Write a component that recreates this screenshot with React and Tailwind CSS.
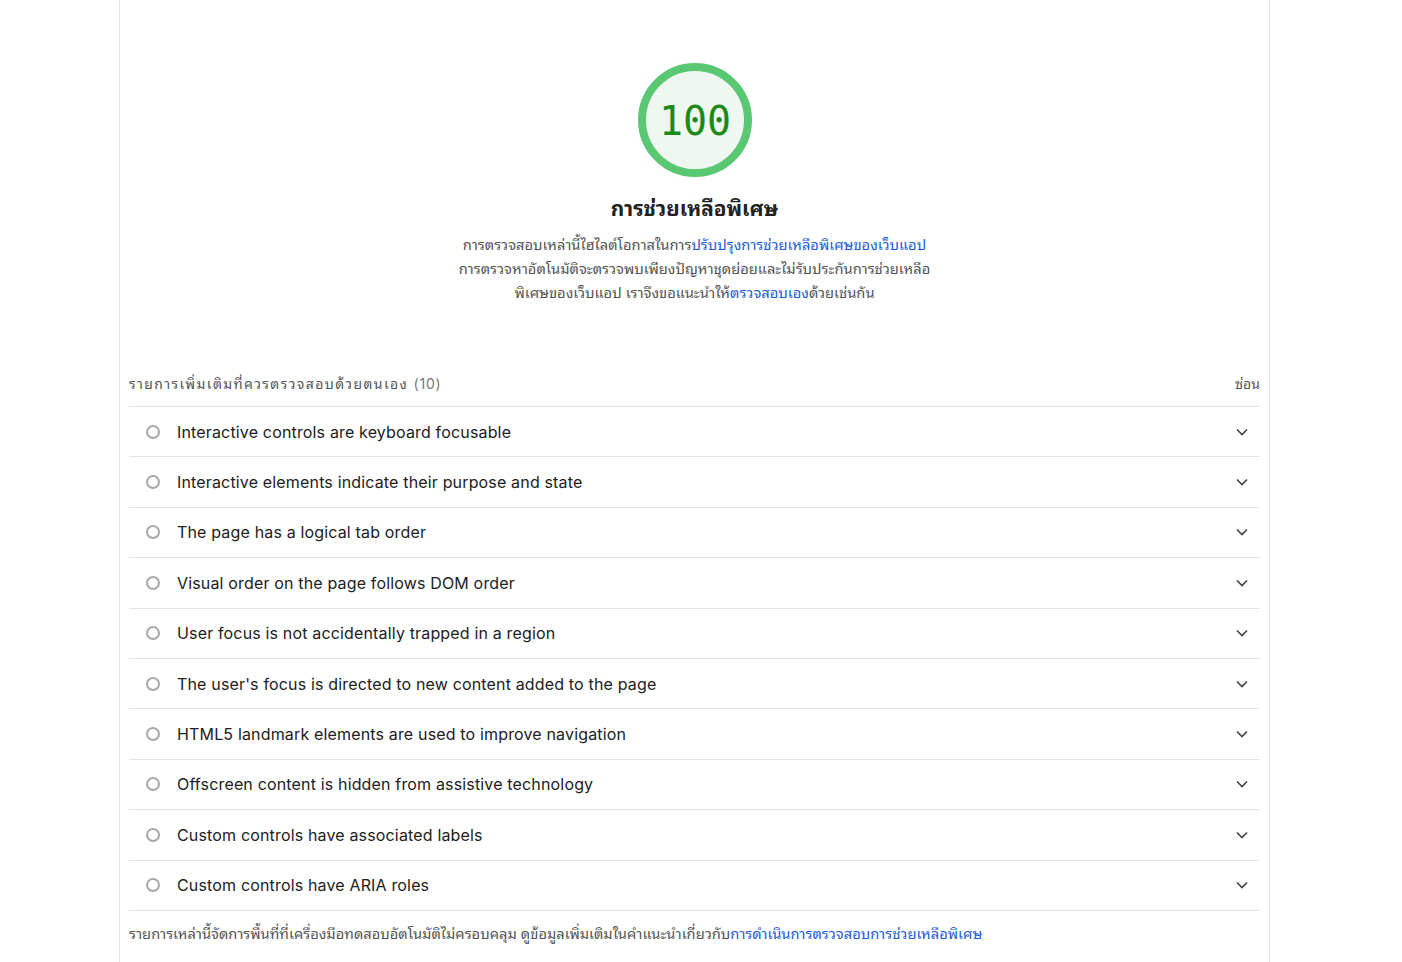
import React from "react";

const audits = [
  "Interactive controls are keyboard focusable",
  "Interactive elements indicate their purpose and state",
  "The page has a logical tab order",
  "Visual order on the page follows DOM order",
  "User focus is not accidentally trapped in a region",
  "The user's focus is directed to new content added to the page",
  "HTML5 landmark elements are used to improve navigation",
  "Offscreen content is hidden from assistive technology",
  "Custom controls have associated labels",
  "Custom controls have ARIA roles",
];

const font =
  "font-['Inter','Noto_Sans_Thai_Looped','Loma','Garuda','Waree','Norasi','Tlwg_Typo','Noto_Sans_Thai','sans-serif']";

const Gauge = () => (
  <svg width="118" height="118" viewBox="0 0 118 118">
    <circle cx="59" cy="59" r="53" fill="#eef7f0" stroke="#5ac772" strokeWidth="8" />
    <text
      x="59"
      y="63"
      textAnchor="middle"
      dominantBaseline="middle"
      fontFamily="DejaVu Sans Mono, monospace"
      fontSize="40"
      fill="#1b8a1b"
    >
      100
    </text>
  </svg>
);

const AuditRow = ({ title }) => (
  <div className="flex items-center h-[50.4px] border-b border-[#e4e4e4] pl-[17px] pr-[8px]">
    <span className="w-[14px] h-[14px] rounded-full border-2 border-[#a8a8a8] shrink-0" />
    <span className="ml-[17px] text-[16px] tracking-[0.16px] text-[#212121] flex-1">{title}</span>
    <svg width="20" height="20" viewBox="0 0 24 24" fill="none" stroke="#444" strokeWidth="2">
      <path d="M6 9l6 6 6-6" />
    </svg>
  </div>
);

const App = () => {
  return (
    <div className={`min-h-screen bg-white ${font}`}>
      <div className="ml-[119px] w-[1151px] min-h-[962px] border-x border-[#e2e2e2] px-[9px]">
        <div className="flex flex-col items-center pt-[61px]">
          <Gauge />
          <h1 className="mt-[15px] text-[20.8px] font-bold text-[#212121] leading-[30px]">
            การช่วยเหลือพิเศษ
          </h1>
          <p className="mt-[9px] text-[14.7px] leading-[24px] text-[#555] text-center">
            การตรวจสอบเหล่านี้ไฮไลต์โอกาสในการ
            <a className="text-[#1c5ce0]">ปรับปรุงการช่วยเหลือพิเศษของเว็บแอป</a>
            <br />
            การตรวจหาอัตโนมัติจะตรวจพบเพียงปัญหาชุดย่อยและไม่รับประกันการช่วยเหลือ
            <br />
            พิเศษของเว็บแอป เราจึงขอแนะนำให้
            <a className="text-[#1c5ce0]">ตรวจสอบเอง</a>
            ด้วยเช่นกัน
          </p>
        </div>

        <div className="mt-[69px] flex items-center justify-between pb-[12px] border-b border-[#e4e4e4]">
          <div className="text-[14px] leading-[20px] text-[#555] tracking-[1.4px]">
            รายการเพิ่มเติมที่ควรตรวจสอบด้วยตนเอง <span className="text-[#777] tracking-[0.8px]">(10)</span>
          </div>
          <div className="text-[14px] leading-[20px] text-[#555]">ซ่อน</div>
        </div>

        <div>
          {audits.map((a) => (
            <AuditRow key={a} title={a} />
          ))}
        </div>

        <p className="mt-[12px] text-[14.7px] leading-[22px] text-[#555]">
          รายการเหล่านี้จัดการพื้นที่ที่เครื่องมือทดสอบอัตโนมัติไม่ครอบคลุม ดูข้อมูลเพิ่มเติมในคำแนะนำเกี่ยวกับ
          <a className="text-[#1c5ce0]">การดำเนินการตรวจสอบการช่วยเหลือพิเศษ</a>
        </p>
      </div>
    </div>
  );
};

export default App;
